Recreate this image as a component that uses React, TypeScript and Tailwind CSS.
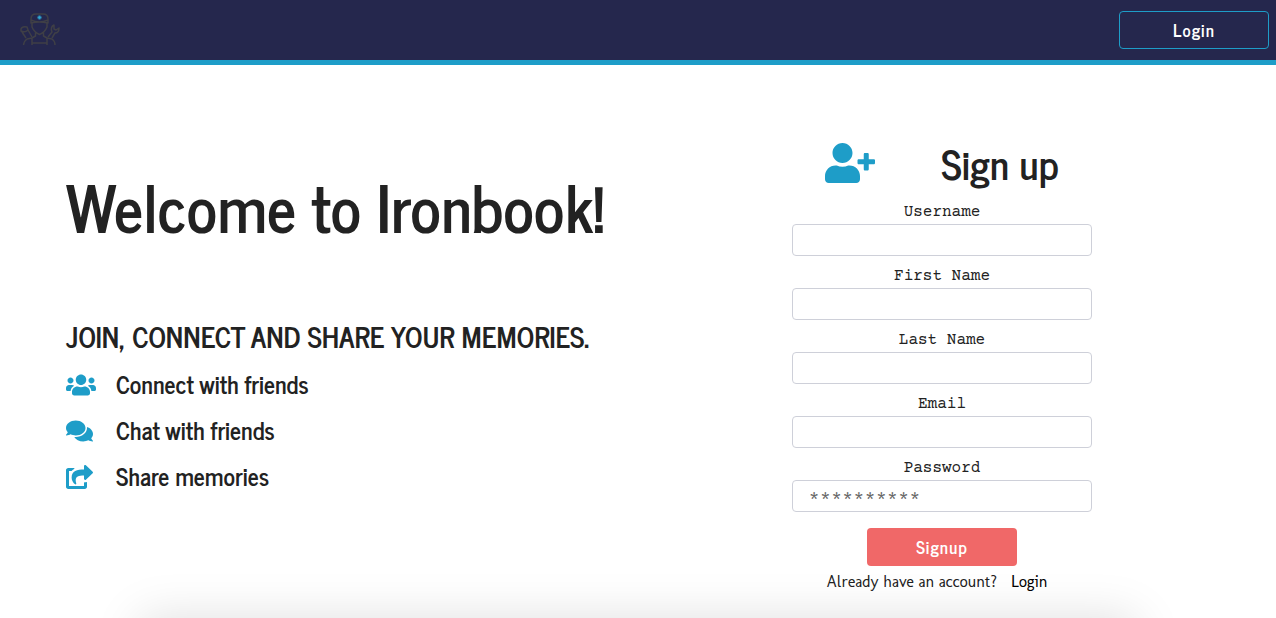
import React from "react";
import { FaComments, FaShareSquare, FaUserPlus, FaUsers } from "react-icons/fa";

const narrow = "font-['News_Cycle','Open_Sans_Condensed','Roboto_Condensed','Noto_Sans_CJK_SC',sans-serif]";

const fields = [
  { id: "username", label: "Username", type: "text", placeholder: "" },
  { id: "firstName", label: "First Name", type: "text", placeholder: "" },
  { id: "lastName", label: "Last Name", type: "text", placeholder: "" },
  { id: "email", label: "Email", type: "email", placeholder: "" },
  { id: "password", label: "Password", type: "password", placeholder: "**********" },
];

const features = [
  { text: "Connect with friends", icon: <FaUsers className="h-6 w-[30px]" /> },
  { text: "Chat with friends", icon: <FaComments className="h-6 w-[27px]" /> },
  { text: "Share memories", icon: <FaShareSquare className="h-6 w-[27px]" /> },
];

function Logo() {
  return (
    <svg viewBox="0 0 40 34" className="h-[34px] w-10" fill="none" stroke="#3f3f46" strokeWidth="1.500" strokeLinejoin="round">
      <path d="M11 10V6Q11 1 16 1H23Q28 1 28 6V10Q19 8 11 10ZM11 7Q19 11 28 7" />
      <path d="M12 10V14Q14 19 19.500 21.500Q25 19 27 14V10M15.500 19V23L12 25M23.500 19V23L27 25M12 25V32M27 25V32M12 30H27M12 25L7 26Q4 28 3.500 32M27 25L32 26Q35 28 35 32" />
      <path d="M1 16Q2 13 7 14L8 17Q5 20 1 18ZM2 19L6 25M8 17L12 24M28 24L32 19Q30 14 34 12V16L36 17L39 15Q39 20 35 20L32 25" />
      <circle cx="19.500" cy="4.500" r="1.800" fill="#32a9d5" stroke="#28709b" strokeWidth="1" />
    </svg>
  );
}

export default function App() {
  return (
    <div className="relative flex min-h-screen flex-col overflow-hidden bg-white text-[#222]">
      <header className="flex h-[65px] items-center justify-between border-b-[5px] border-[#1e9dc8] bg-[#25274d] pr-[7px] pl-5">
        <a href="#home" aria-label="Ironbook home" className="pb-px">
          <Logo />
        </a>
        <button type="button" className={`h-[38px] w-[150px] rounded border border-[#1e9dc8] pt-[2px] text-[17px] font-bold tracking-[1px] text-white ${narrow}`}>
          Login
        </button>
      </header>

      <main className="grid grid-cols-2 pb-6">
        <section className={`pt-[99px] pl-[66px] font-bold whitespace-nowrap ${narrow}`}>
          <h1 className="text-[64px] leading-[84px]">Welcome to Ironbook!</h1>
          <h2 className="mt-[66px] text-[28px] leading-[44px]">JOIN, CONNECT AND SHARE YOUR MEMORIES.</h2>
          <ul className="mt-[3px] text-2xl">
            {features.map((f) => (
              <li key={f.text} className="flex h-[46px] items-center">
                <span className="w-[50px] pt-[2px] text-[#1e9dc8]">{f.icon}</span>
                {f.text}
              </li>
            ))}
          </ul>
        </section>

        <section className="flex flex-col items-center pt-[63px] pr-[30px]">
          <div className="flex h-[72px] items-center gap-[66px] pb-[2px]">
            <FaUserPlus className="h-10 w-[50px] text-[#1e9dc8]" />
            <h2 className={`text-[40px] leading-[60px] font-bold ${narrow}`}>Sign up</h2>
          </div>
          <form className="flex w-[300px] flex-col items-center gap-2">
            {fields.map((f) => (
              <div key={f.id} className="w-full text-center">
                <label htmlFor={f.id} className="block font-['Courier_Prime','Liberation_Mono',monospace] text-base leading-6">
                  {f.label}
                </label>
                <input
                  id={f.id}
                  type={f.type}
                  placeholder={f.placeholder}
                  className="block h-8 w-full rounded border border-[#ced0d9] px-4 pt-1 font-['Courier_Prime','Liberation_Mono',monospace] text-[17px] tracking-[1px] placeholder:text-[#666]"
                />
              </div>
            ))}
            <button type="button" className={`mt-2 h-[38px] w-[150px] rounded bg-[#f06868] pt-[2px] text-[17px] font-bold tracking-[1px] text-white ${narrow}`}>
              Signup
            </button>
          </form>
          <p className="mt-1 flex gap-[14px] pr-[10px] font-[Molengo,Tauri,'Noto_Sans',sans-serif] text-base leading-6">
            Already have an account?
            <a href="#login" className="text-black">Login</a>
          </p>
        </section>
      </main>

      <div className="absolute inset-x-[11%] top-full h-40 shadow-[0_0_45px_rgba(0,0,0,0.13)]" />
    </div>
  );
}
